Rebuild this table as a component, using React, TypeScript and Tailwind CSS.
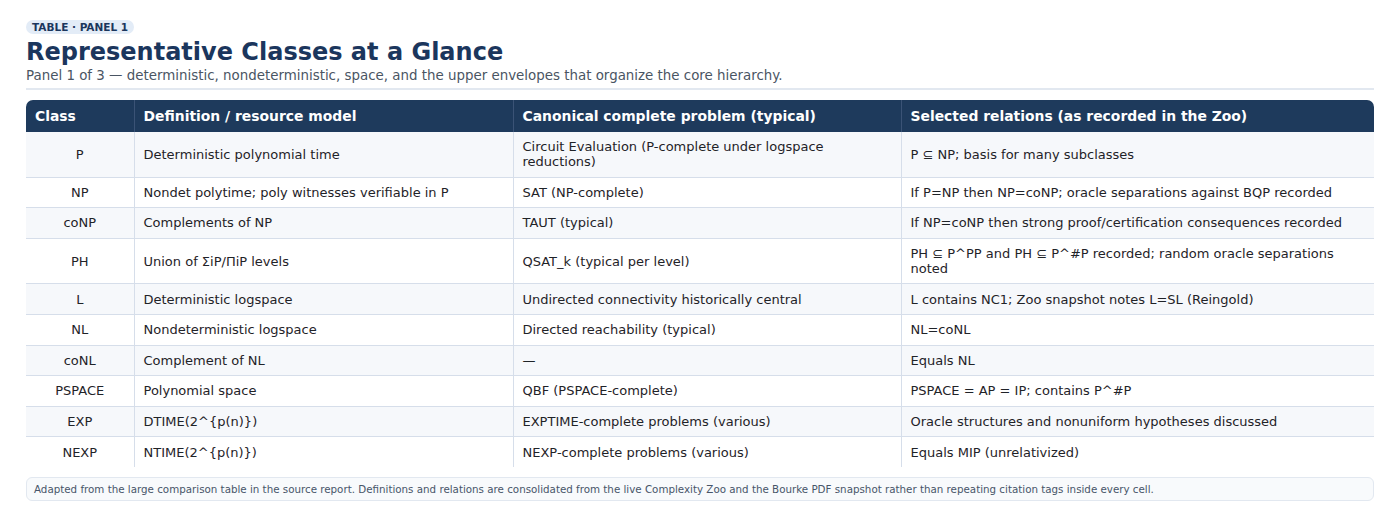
const rows: [string, string, string, string][] = [
  ['P', 'Deterministic polynomial time', 'Circuit Evaluation (P-complete under logspace reductions)', 'P ⊆ NP; basis for many subclasses'],
  ['NP', 'Nondet polytime; poly witnesses verifiable in P', 'SAT (NP-complete)', 'If P=NP then NP=coNP; oracle separations against BQP recorded'],
  ['coNP', 'Complements of NP', 'TAUT (typical)', 'If NP=coNP then strong proof/certification consequences recorded'],
  ['PH', 'Union of ΣiP/ΠiP levels', 'QSAT_k (typical per level)', 'PH ⊆ P^PP and PH ⊆ P^#P recorded; random oracle separations noted'],
  ['L', 'Deterministic logspace', 'Undirected connectivity historically central', 'L contains NC1; Zoo snapshot notes L=SL (Reingold)'],
  ['NL', 'Nondeterministic logspace', 'Directed reachability (typical)', 'NL=coNL'],
  ['coNL', 'Complement of NL', '—', 'Equals NL'],
  ['PSPACE', 'Polynomial space', 'QBF (PSPACE-complete)', 'PSPACE = AP = IP; contains P^#P'],
  ['EXP', 'DTIME(2^{p(n)})', 'EXPTIME-complete problems (various)', 'Oracle structures and nonuniform hypotheses discussed'],
  ['NEXP', 'NTIME(2^{p(n)})', 'NEXP-complete problems (various)', 'Equals MIP (unrelativized)'],
]

const headers = ['Class', 'Definition / resource model', 'Canonical complete problem (typical)', 'Selected relations (as recorded in the Zoo)']

export default function App() {
  return (
    <div className="w-[1400px] h-[515px] bg-white px-[26px] pt-[20px] font-['DejaVu_Sans',sans-serif] text-[#1f2328]">
      {/* heading */}
      <div className="border-b-2 border-[#e2e8f0] pb-[4px]">
        <div className="flex">
          <span className="rounded-full bg-[#e3ecf7] px-[6px] text-[10.5px] font-bold leading-[14px] text-[#1b365d]">
            TABLE · PANEL 1
          </span>
        </div>
        <h1 className="mt-[4px] text-[24px] font-bold leading-[28px] text-[#1b365d]">
          Representative Classes at a Glance
        </h1>
        <p className="mt-[2px] text-[13.4px] leading-[16px] text-[#4a5563]">
          Panel 1 of 3 — deterministic, nondeterministic, space, and the upper envelopes that organize the core hierarchy.
        </p>
      </div>

      {/* table */}
      <table className="mt-[10px] w-full table-fixed border-collapse text-[13px]">
        <colgroup>
          <col className="w-[108px]" />
          <col className="w-[379px]" />
          <col className="w-[388px]" />
          <col />
        </colgroup>
        <thead>
          <tr className="bg-[#1e3a5c] text-white">
            {headers.map((h, i) => (
              <th
                key={h}
                className={`px-[9px] py-[8px] text-left text-[13.9px] font-bold leading-[16px] ${i === 0 ? 'rounded-tl-[7px]' : 'border-l border-[#3b5376]'} ${i === 3 ? 'rounded-tr-[7px]' : ''}`}
              >
                {h}
              </th>
            ))}
          </tr>
        </thead>
        <tbody>
          {rows.map((r, ri) => (
            <tr key={r[0]} className={`${ri % 2 === 0 ? 'bg-[#f6f8fb]' : 'bg-white'} ${ri < rows.length - 1 ? 'border-b border-[#d6deea]' : ''}`}>
              {r.map((c, ci) => (
                <td
                  key={ci}
                  className={`px-[9px] py-[7.3px] align-middle leading-[15px] ${ci === 0 ? 'text-center' : 'border-l border-[#d6deea]'}`}
                >
                  {c}
                </td>
              ))}
            </tr>
          ))}
        </tbody>
      </table>

      {/* footnote */}
      <div className="mt-[10px] rounded-[6px] border border-[#e2e8f0] bg-[#f8fafc] px-[7px] py-[4px] text-[10.3px] leading-[14px] text-[#475569]">
        Adapted from the large comparison table in the source report. Definitions and relations are consolidated from the live Complexity Zoo and the Bourke PDF snapshot rather than repeating citation tags inside every cell.
      </div>
    </div>
  )
}
